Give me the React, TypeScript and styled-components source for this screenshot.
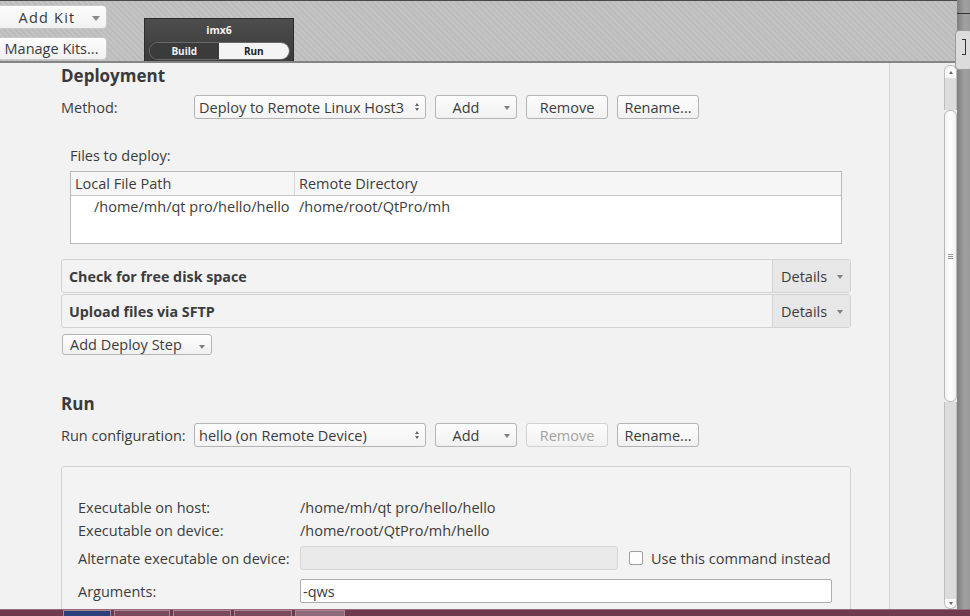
import React from "react";
import styled, { createGlobalStyle, css } from "styled-components";

const Global = createGlobalStyle`
  html, body { margin: 0; padding: 0; background: #f2f2f2; }
  body {
    font-family: "Open Sans", "Noto Sans", "DejaVu Sans", sans-serif;
    font-size: 14.5px;
    color: #3c3c3c;
  }
  * { box-sizing: border-box; }
`;

const Screen = styled.div`
  width: 970px;
  height: 616px;
  overflow: hidden;
  display: flex;
  flex-direction: column;
`;

const Upper = styled.div`
  display: flex;
  flex: 1;
  min-height: 0;
`;

const Window = styled.div`
  width: 957px;
  display: flex;
  flex-direction: column;
`;

const SideStrip = styled.div`
  width: 13px;
  position: relative;
  background: linear-gradient(90deg, #7e7e7e, #a2a2a2 60%, #9a9a9a);
`;

const StripBox = styled.div`
  position: absolute;
  left: -2px;
  top: 30px;
  width: 18px;
  height: 40px;
  border: 1px solid #9a9a9a;
  border-radius: 4px;
  background: #dcdcdc;
  &::after {
    content: "";
    position: absolute;
    left: 6px;
    top: 8px;
    width: 3px;
    height: 14px;
    border: 1px solid #333;
    border-left: none;
  }
`;

const StripDash = styled.div`
  position: absolute;
  left: 0;
  top: 13px;
  width: 13px;
  height: 1px;
  background: #333;
`;

const TopBar = styled.div`
  height: 63px;
  border-top: 1px solid #4a4a4a;
  border-bottom: 2px solid #858585;
  background: repeating-linear-gradient(
    45deg,
    #bcbcbc 0px,
    #bcbcbc 2px,
    #c3c3c3 2px,
    #c3c3c3 4px
  );
  display: flex;
  align-items: flex-start;
`;

const KitColumn = styled.div`
  display: flex;
  flex-direction: column;
  gap: 8px;
  margin-left: -4px;
  padding-top: 4px;
  width: 111px;
`;

const KitButton = styled.div<{ $h: number }>`
  height: ${(p) => p.$h}px;
  border: 1px solid #c9c9c9;
  border-radius: 4px;
  background: linear-gradient(#fdfdfd, #f1f1f1);
  display: flex;
  align-items: center;
  justify-content: center;
  position: relative;
  font-size: 14.5px;
  color: #3a3a3a;
`;

const KitLabel = styled.span`
  letter-spacing: 1.2px;
  margin-right: 9px;
`;

const KitArrow = styled.span`
  position: absolute;
  right: 6px;
  top: 10px;
  border-left: 4px solid transparent;
  border-right: 4px solid transparent;
  border-top: 5px solid #8a8a8a;
`;

const TargetPanel = styled.div`
  margin-left: 37px;
  margin-top: 17px;
  width: 150px;
  height: 43px;
  background: linear-gradient(#4d4d4d, #3a3a3a);
  border: 1px solid #2c2c2c;
  border-bottom: none;
  display: flex;
  flex-direction: column;
  align-items: center;
`;

const TargetName = styled.div`
  color: #f2f2f2;
  font-weight: 700;
  font-size: 10.5px;
  line-height: 14px;
  margin-top: 4px;
`;

const Segmented = styled.div`
  margin-top: 5px;
  width: 141px;
  height: 18px;
  border-radius: 9px;
  border: 1px solid #6a6a6a;
  display: flex;
  overflow: hidden;
`;

const Segment = styled.div<{ $active?: boolean }>`
  flex: 1;
  display: flex;
  align-items: center;
  justify-content: center;
  font-size: 10px;
  font-weight: 700;
  ${(p) =>
    p.$active
      ? css`
          background: #f4f4f4;
          color: #222;
        `
      : css`
          background: #3b3b3b;
          color: #f0f0f0;
        `}
`;

const Main = styled.div`
  flex: 1;
  display: flex;
  min-height: 0;
`;

const Content = styled.div`
  width: 890px;
  border-right: 1px solid #d4d4d4;
  background: #f2f2f2;
  padding: 3px 0 0 61px;
  display: flex;
  flex-direction: column;
  overflow: hidden;
`;

const Gutter = styled.div`
  width: 54px;
  background: #eeeeee;
`;

const Scrollbar = styled.div`
  width: 13px;
  background: #eeeeee;
  padding-top: 2px;
  display: flex;
  flex-direction: column;
`;

const ScrollEnd = styled.div<{ $top?: boolean }>`
  height: ${(p) => (p.$top ? 13 : 10)}px;
  background: #fafafa;
  border: 1px solid #bdbdbd;
  ${(p) =>
    p.$top
      ? css`
          border-radius: 6px 6px 0 0;
          border-bottom: none;
        `
      : css`
          border-radius: 0 0 6px 6px;
          border-top: none;
        `}
  display: flex;
  align-items: center;
  justify-content: center;
`;

const TinyTri = styled.span<{ $up?: boolean }>`
  border-left: 2.5px solid transparent;
  border-right: 2.5px solid transparent;
  ${(p) =>
    p.$up
      ? css`
          border-bottom: 3px solid #666;
        `
      : css`
          border-top: 3px solid #666;
        `}
`;

const Track = styled.div<{ $h?: number }>`
  ${(p) => (p.$h ? `height: ${p.$h}px;` : "flex: 1;")}
  background: #dcdcdc;
  border-left: 1px solid #bdbdbd;
  border-right: 1px solid #bdbdbd;
`;

const Thumb = styled.div`
  height: 292px;
  background: linear-gradient(90deg, #f2f2f2, #ffffff 50%, #f0f0f0);
  border: 1px solid #b8b8b8;
  border-radius: 6px;
  display: flex;
  align-items: center;
  justify-content: center;
`;

const Grip = styled.div`
  width: 5px;
  height: 5px;
  border-top: 1px solid #999;
  border-bottom: 1px solid #999;
  position: relative;
  &::after {
    content: "";
    position: absolute;
    left: 0;
    right: 0;
    top: 1px;
    height: 1px;
    background: #999;
  }
`;

const Taskbar = styled.div`
  height: 7px;
  background: #6e3a4d;
  border-top: 1px solid #9a6a7a;
  display: flex;
  gap: 3px;
  padding-left: 63px;
`;

const TaskItem = styled.div<{ $w: number; $c: string }>`
  width: ${(p) => p.$w}px;
  background: ${(p) => p.$c};
  border: 1px solid #a98595;
  border-bottom: none;
`;

const Heading = styled.div`
  font-size: 17px;
  font-weight: 700;
  line-height: 20px;
  color: #3a3a3a;
`;

const Row = styled.div<{ $mt: number }>`
  display: flex;
  align-items: center;
  height: 24px;
  margin-top: ${(p) => p.$mt}px;
`;

const RowLabel = styled.div`
  width: 133px;
  white-space: nowrap;
`;

const Combo = styled.div`
  width: 232px;
  height: 24px;
  border: 1px solid #b4b4b4;
  border-radius: 3px;
  background: linear-gradient(#fdfdfd, #f3f3f3);
  display: flex;
  align-items: center;
  padding: 0 6px 0 4px;
  justify-content: space-between;
  white-space: nowrap;
`;

const Spin = styled.span`
  display: flex;
  flex-direction: column;
  gap: 2px;
`;

const ButtonGroup = styled.div`
  display: flex;
  gap: 9px;
  margin-left: 9px;
`;

const Button = styled.div<{ $disabled?: boolean; $w?: number }>`
  width: ${(p) => p.$w ?? 82}px;
  height: 24px;
  border: 1px solid ${(p) => (p.$disabled ? "#d2d2d2" : "#b4b4b4")};
  border-radius: 3px;
  background: linear-gradient(#fdfdfd, #f1f1f1);
  color: ${(p) => (p.$disabled ? "#a3a3a3" : "#3c3c3c")};
  display: flex;
  align-items: center;
  justify-content: center;
  position: relative;
  white-space: nowrap;
`;

const MenuButton = styled(Button)`
  justify-content: flex-start;
  padding-left: 7px;
`;

const DropArrow = styled.span<{ $right?: number; $top?: number }>`
  position: absolute;
  right: ${(p) => p.$right ?? 6}px;
  top: ${(p) => p.$top ?? 10}px;
  border-left: 3.5px solid transparent;
  border-right: 3.5px solid transparent;
  border-top: 4px solid #808080;
`;

const FilesBlock = styled.div`
  margin-left: 9px;
  margin-top: 28px;
  display: flex;
  flex-direction: column;
`;

const SmallLabel = styled.div`
  line-height: 18px;
`;

const Table = styled.div`
  margin-top: 6px;
  width: 772px;
  height: 73px;
  border: 1px solid #b9b9b9;
  background: #ffffff;
`;

const TableHeader = styled.div`
  display: grid;
  grid-template-columns: 224px 1fr;
  height: 24px;
  background: #f6f6f6;
  border-bottom: 1px solid #c8c8c8;
`;

const HeaderCell = styled.div<{ $divider?: boolean }>`
  display: flex;
  align-items: center;
  padding-left: 4px;
  ${(p) => p.$divider && "border-right: 1px solid #d8d8d8;"}
`;

const TableRow = styled.div`
  display: grid;
  grid-template-columns: 228px 1fr;
  height: 21px;
  align-items: center;
`;

const Cell = styled.div<{ $indent: number }>`
  padding-left: ${(p) => p.$indent}px;
  white-space: nowrap;
`;

const StepList = styled.div`
  margin-top: 15px;
  display: flex;
  flex-direction: column;
  gap: 1px;
  width: 790px;
`;

const Step = styled.div`
  height: 34px;
  border: 1px solid #d2d2d2;
  border-radius: 3px;
  background: #f3f3f3;
  display: flex;
  align-items: stretch;
`;

const StepTitle = styled.div`
  flex: 1;
  display: flex;
  align-items: center;
  padding-left: 7px;
  font-weight: 700;
  font-size: 14.3px;
`;

const DetailsButton = styled.div`
  width: 78px;
  background: #e7e7e7;
  border-left: 1px solid #d2d2d2;
  display: flex;
  align-items: center;
  padding-left: 8px;
  position: relative;
`;

const AddStepButton = styled(MenuButton)`
  margin-top: 6px;
  margin-left: 1px;
`;

const RunHeading = styled(Heading)`
  margin-top: 39px;
`;

const GroupBox = styled.div`
  margin-top: 19px;
  width: 790px;
  border: 1px solid #d2d2d2;
  border-radius: 3px;
  background: #f3f3f3;
  padding: 31px 18px 20px 16px;
  display: flex;
  flex-direction: column;
`;

const FormRow = styled.div<{ $h: number; $mt?: number }>`
  display: flex;
  align-items: center;
  height: ${(p) => p.$h}px;
  margin-top: ${(p) => p.$mt ?? 0}px;
  white-space: nowrap;
`;

const FormLabel = styled.div`
  width: 222px;
`;

const DisabledInput = styled.div`
  width: 318px;
  height: 24px;
  background: #eaeaea;
  border: 1px solid #d6d6d6;
  border-radius: 3px;
`;

const CheckBox = styled.div`
  width: 14px;
  height: 14px;
  margin-left: 11px;
  margin-right: 8px;
  background: #fdfdfd;
  border: 1px solid #9e9e9e;
  border-radius: 2px;
`;

const TextInput = styled.div`
  flex: 1;
  height: 24px;
  background: #ffffff;
  border: 1px solid #adadad;
  border-radius: 2px;
  display: flex;
  align-items: center;
  padding-left: 2px;
`;

const SpinArrows = () => (
  <Spin>
    <TinyTri $up />
    <TinyTri />
  </Spin>
);

export default function App() {
  return (
    <Screen>
      <Global />
      <Upper>
        <Window>
          <TopBar>
            <KitColumn>
              <KitButton $h={24}>
                <KitLabel>Add Kit</KitLabel>
                <KitArrow />
              </KitButton>
              <KitButton $h={23}>Manage Kits...</KitButton>
            </KitColumn>
            <TargetPanel>
              <TargetName>imx6</TargetName>
              <Segmented>
                <Segment>Build</Segment>
                <Segment $active>Run</Segment>
              </Segmented>
            </TargetPanel>
          </TopBar>
          <Main>
            <Content>
              <Heading>Deployment</Heading>
              <Row $mt={9}>
                <RowLabel>Method:</RowLabel>
                <Combo>
                  <span>Deploy to Remote Linux Host3</span>
                  <SpinArrows />
                </Combo>
                <ButtonGroup>
                  <Button>
                    <span style={{ marginRight: 20 }}>Add</span>
                    <DropArrow $right={6} />
                  </Button>
                  <Button>Remove</Button>
                  <Button>Rename...</Button>
                </ButtonGroup>
              </Row>

              <FilesBlock>
                <SmallLabel>Files to deploy:</SmallLabel>
                <Table>
                  <TableHeader>
                    <HeaderCell $divider>Local File Path</HeaderCell>
                    <HeaderCell>Remote Directory</HeaderCell>
                  </TableHeader>
                  <TableRow>
                    <Cell $indent={23}>/home/mh/qt pro/hello/hello</Cell>
                    <Cell $indent={0}>/home/root/QtPro/mh</Cell>
                  </TableRow>
                </Table>
              </FilesBlock>

              <StepList>
                <Step>
                  <StepTitle>Check for free disk space</StepTitle>
                  <DetailsButton>
                    Details
                    <DropArrow $right={7} $top={15} />
                  </DetailsButton>
                </Step>
                <Step>
                  <StepTitle>Upload files via SFTP</StepTitle>
                  <DetailsButton>
                    Details
                    <DropArrow $right={7} $top={15} />
                  </DetailsButton>
                </Step>
              </StepList>
              <AddStepButton $w={150}>
                Add Deploy Step
                <DropArrow $right={6} />
              </AddStepButton>

              <RunHeading>Run</RunHeading>
              <Row $mt={9}>
                <RowLabel>Run configuration:</RowLabel>
                <Combo>
                  <span>hello (on Remote Device)</span>
                  <SpinArrows />
                </Combo>
                <ButtonGroup>
                  <Button>
                    <span style={{ marginRight: 20 }}>Add</span>
                    <DropArrow $right={6} />
                  </Button>
                  <Button $disabled>Remove</Button>
                  <Button>Rename...</Button>
                </ButtonGroup>
              </Row>

              <GroupBox>
                <FormRow $h={18}>
                  <FormLabel>Executable on host:</FormLabel>
                  <span>/home/mh/qt pro/hello/hello</span>
                </FormRow>
                <FormRow $h={18} $mt={5}>
                  <FormLabel>Executable on device:</FormLabel>
                  <span>/home/root/QtPro/mh/hello</span>
                </FormRow>
                <FormRow $h={24} $mt={7}>
                  <FormLabel>Alternate executable on device:</FormLabel>
                  <DisabledInput />
                  <CheckBox />
                  <span>Use this command instead</span>
                </FormRow>
                <FormRow $h={24} $mt={9}>
                  <FormLabel>Arguments:</FormLabel>
                  <TextInput>-qws</TextInput>
                </FormRow>
              </GroupBox>
            </Content>
            <Gutter />
            <Scrollbar>
              <ScrollEnd $top>
                <TinyTri $up />
              </ScrollEnd>
              <Track $h={32} />
              <Thumb>
                <Grip />
              </Thumb>
              <Track />
              <ScrollEnd>
                <TinyTri />
              </ScrollEnd>
            </Scrollbar>
          </Main>
        </Window>
        <SideStrip>
          <StripDash />
          <StripBox />
        </SideStrip>
      </Upper>
      <Taskbar>
        <TaskItem $w={48} $c="#2b3f7a" />
        <TaskItem $w={56} $c="#7a4a5c" />
        <TaskItem $w={58} $c="#7a4a5c" />
        <TaskItem $w={58} $c="#7a4a5c" />
        <TaskItem $w={50} $c="#8f6a7a" />
      </Taskbar>
    </Screen>
  );
}
